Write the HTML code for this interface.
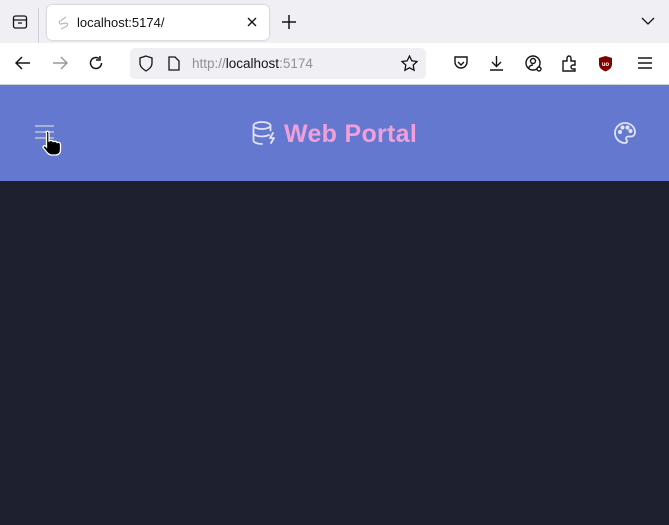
<!DOCTYPE html>
<html><head><meta charset="utf-8"><style>
*{margin:0;padding:0;box-sizing:border-box}
body{width:669px;height:525px;overflow:hidden;font-family:"Liberation Sans",sans-serif;background:#1e1f2f;position:relative}
.tabs{position:absolute;top:0;left:0;width:669px;height:43px;background:#f0f0f4}
.tab{position:absolute;left:47px;top:5px;width:222px;height:35px;background:#fff;border-radius:5px;box-shadow:0 0 2px rgba(0,0,0,.25)}
.tab span{position:absolute;left:30px;top:10px;font-size:13px;color:#15141a}
.toolbar{position:absolute;top:43px;left:0;width:669px;height:41px;background:#fff}
.url{position:absolute;left:130px;top:5px;width:296px;height:31px;background:#f0f0f4;border-radius:5px}
.url span{position:absolute;left:62px;top:8px;font-size:13.5px;color:#8f8f9d}
.url b{font-weight:normal;color:#15141a}
.line{position:absolute;top:84px;left:0;width:669px;height:1px;background:#cfcfd8}
.header{position:absolute;top:85px;left:0;width:669px;height:96px;background:#6478cf}
.title{position:absolute;left:284px;top:120px;font-size:25px;font-weight:bold;color:#f19fdb;letter-spacing:0.3px}
svg{position:absolute}
</style></head><body>
<div class="tabs">
<svg style="left:12px;top:14px" width="16" height="16" viewBox="0 0 16 16" fill="none" stroke="#15141a" stroke-width="1.3"><rect x="1.5" y="2" width="13" height="12" rx="2"/><path d="M1.5 6h13M6 9h4"/></svg>
<div style="position:absolute;left:38px;top:8px;width:1px;height:35px;background:#d0d0d8"></div>
<div class="tab"><svg style="left:10px;top:10px" width="13" height="15" viewBox="0 0 13 15" fill="none" stroke="#bbb" stroke-width="1.2"><path d="M9 2 3 6c-1 1-1 3 1 3l5-1c2 0 2 2 1 3l-6 3"/></svg><span>localhost:5174/</span>
<svg style="left:200px;top:12px" width="10" height="10" viewBox="0 0 10 10" stroke="#15141a" stroke-width="1.4"><path d="M1 1l8 8M9 1l-8 8"/></svg></div>
<svg style="left:282px;top:15px" width="14" height="14" viewBox="0 0 14 14" stroke="#15141a" stroke-width="1.5"><path d="M7 0v14M0 7h14"/></svg>
<svg style="left:641px;top:17px" width="14" height="9" viewBox="0 0 14 9" fill="none" stroke="#15141a" stroke-width="1.3"><path d="M1 1l6 6 6-6"/></svg>
</div>
<div class="toolbar">
<svg style="left:15px;top:13px" width="16" height="14" viewBox="0 0 16 14" fill="none" stroke="#15141a" stroke-width="1.5"><path d="M15 7H2M7 1 1 7l6 6"/></svg>
<svg style="left:52px;top:13px" width="16" height="14" viewBox="0 0 16 14" fill="none" stroke="#999" stroke-width="1.5"><path d="M1 7h13M9 1l6 6-6 6"/></svg>
<svg style="left:88px;top:12px" width="16" height="16" viewBox="0 0 16 16" fill="none" stroke="#15141a" stroke-width="1.5"><path d="M13.5 8A5.5 5.5 0 1 1 11 3.4M12 1v4H8"/></svg>
<div class="url">
<svg style="left:8px;top:7px" width="16" height="17" viewBox="0 0 16 17" fill="none" stroke="#15141a" stroke-width="1.3"><path d="M8 1 2 3v5c0 4 3 6 6 8 3-2 6-4 6-8V3z"/></svg>
<svg style="left:38px;top:8px" width="12" height="15" viewBox="0 0 12 15" fill="none" stroke="#15141a" stroke-width="1.3"><path d="M1 1h6l4 4v9H1z"/></svg>
<span>http://<b>localhost</b>:5174</span>
<svg style="left:271px;top:7px" width="17" height="17" viewBox="0 0 17 17" fill="none" stroke="#15141a" stroke-width="1.3"><path d="M8.5 1l2.3 4.8 5.2.7-3.8 3.6.9 5.2-4.6-2.5-4.6 2.5.9-5.2L1 6.5l5.2-.7z"/></svg>
</div>
<svg style="left:453px;top:13px" width="16" height="15" viewBox="0 0 16 15" fill="none" stroke="#15141a" stroke-width="1.4"><path d="M2 1h12v5a6 6 0 0 1-12 0z M5 6l3 3 3-3"/></svg>
<svg style="left:489px;top:12px" width="15" height="16" viewBox="0 0 15 16" fill="none" stroke="#15141a" stroke-width="1.4"><path d="M7.5 1v10M3 7l4.5 4.5L12 7M1 15h13"/></svg>
<svg style="left:525px;top:12px" width="18" height="18" viewBox="0 0 18 18" fill="none" stroke="#15141a" stroke-width="1.4"><circle cx="8" cy="8" r="7"/><circle cx="8" cy="6" r="2.5"/><path d="M3.5 13c1-2 3-3 4.5-3"/><circle cx="14" cy="14" r="2" fill="#fff"/></svg>
<svg style="left:561px;top:12px" width="16" height="17" viewBox="0 0 16 17" fill="none" stroke="#15141a" stroke-width="1.4"><path d="M2 16V6h4V3a2 2 0 0 1 4 0v3h4v4h-2a2 2 0 0 0 0 4h2v2z"/></svg>
<svg style="left:598px;top:12px" width="15" height="17" viewBox="0 0 15 17"><path d="M7.5 1 14 3v6c0 4-3 6-6.5 7.5C4 15 1 13 1 9V3z" fill="#800000"/><text x="7.5" y="11" font-size="6" fill="#fff" text-anchor="middle" font-family="Liberation Sans" font-weight="bold">uo</text></svg>
<svg style="left:638px;top:14px" width="14" height="12" viewBox="0 0 14 12" stroke="#15141a" stroke-width="1.4"><path d="M0 1h14M0 6h14M0 11h14"/></svg>
</div>
<div class="line"></div>
<div class="header"></div>
<svg style="left:35px;top:125px" width="19" height="15" viewBox="0 0 19 15" stroke="#a9b0d6" stroke-width="2"><path d="M0 1h19M0 7h19M0 13h19"/></svg>
<svg style="left:40px;top:130px" width="22" height="26" viewBox="0 0 22 26"><path d="M6 2c1-1 3-1 3 1v8l2-.5c1-.2 2 .5 2 1l2-.2c1 0 2 .6 2 1.2l1.5-.1c1 0 2 .8 2 2V20c0 3-2 5-5 5h-4c-2 0-3-1-4-2l-4-5c-1-1 0-3 2-2l1 1V3z" fill="#000" stroke="#fff" stroke-width="1.3"/></svg>
<svg style="left:252px;top:121px" width="24" height="25" viewBox="0 0 24 25" fill="none" stroke="#dfe3f5" stroke-width="1.8" stroke-linecap="round" stroke-linejoin="round"><ellipse cx="10" cy="4.5" rx="8.5" ry="3.5"/><path d="M1.5 4.5v15c0 2 4 3.5 8.5 3.5M18.5 4.5v5M1.5 12c0 2 4 3.5 8.5 3.5 3 0 5-.6 7-1.5M21 12l-3 5h4l-3 5"/></svg>
<div class="title">Web Portal</div>
<svg style="left:613px;top:121px" width="24" height="24" viewBox="0 0 24 24" fill="none" stroke="#dfe3f5" stroke-width="1.8" stroke-linejoin="round"><path d="M12 2A10 10 0 0 0 12 22c1.5 0 2-1 2-2s-1-1.5-1-2.5 1-2 2-2h3c2.5 0 4-2 4-4.5C22 6 17.5 2 12 2z"/><circle cx="7" cy="11" r="1.2" fill="#dfe3f5"/><circle cx="9.5" cy="6.5" r="1.2" fill="#dfe3f5"/><circle cx="14.5" cy="6.5" r="1.2" fill="#dfe3f5"/><circle cx="17.5" cy="10" r="1.2" fill="#dfe3f5"/></svg>
</body></html>
